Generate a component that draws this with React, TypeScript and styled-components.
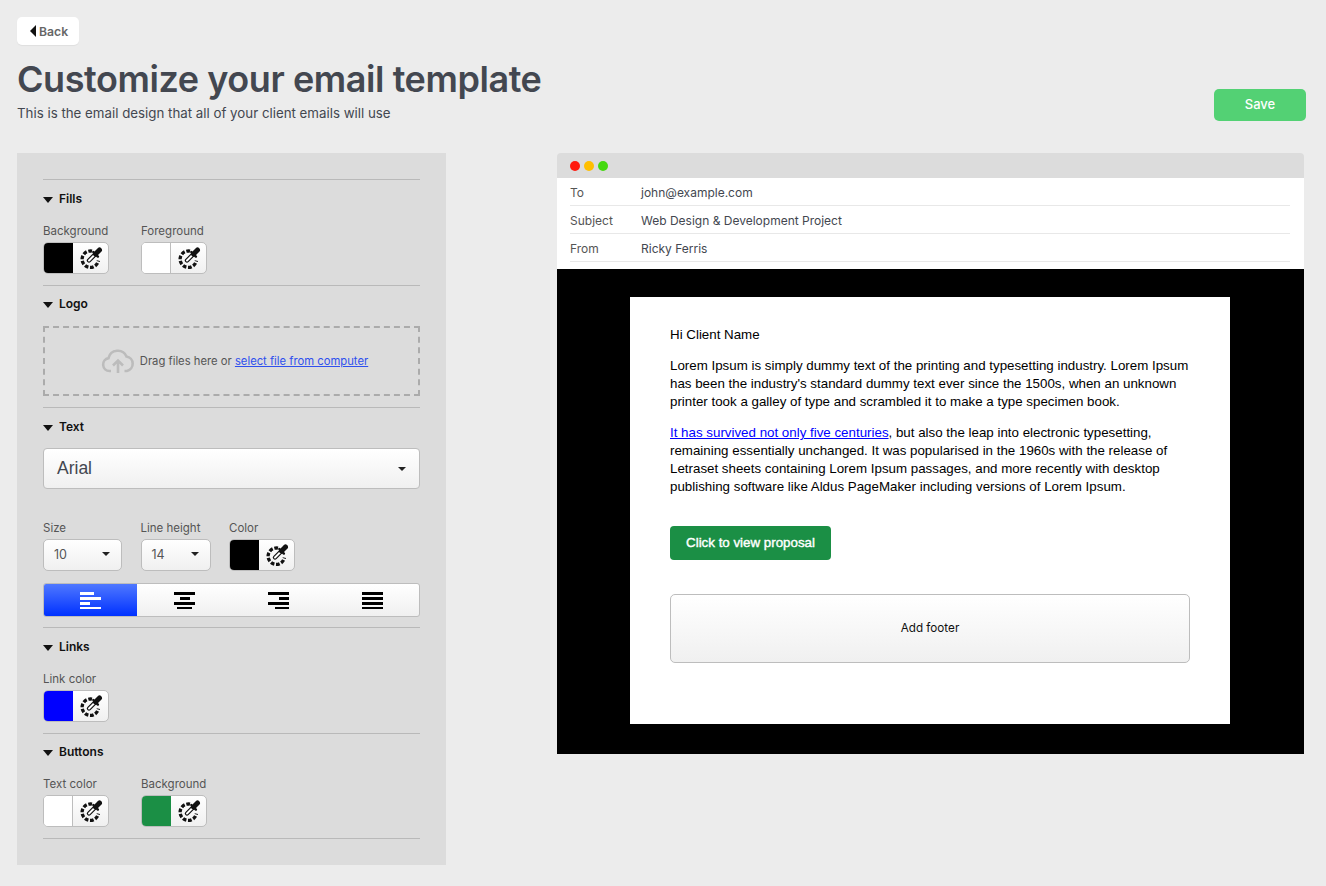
import React from "react";
import styled, { createGlobalStyle } from "styled-components";

const Global = createGlobalStyle`
  html, body { margin: 0; padding: 0; background: #ececec; }
  body { font-family: "Inter", "Liberation Sans", sans-serif; color: #434750; }
  * { box-sizing: border-box; }
`;
const Page = styled.div`
  width: 1326px; height: 886px; padding: 17px 20px 0 17px; overflow: hidden;
`;
const BackButton = styled.button`
  display: flex; align-items: center; gap: 3px; width: 62px; height: 28px; padding: 0 0 0 13px;
  background: #fff; border: 0; border-radius: 5px; box-shadow: 0 1px 1px rgba(0,0,0,.06);
  font: 600 12.2px "Inter", sans-serif; color: #666;
`;
const BackCaret = styled.span`
  width: 0; height: 0; border-style: solid; border-width: 6px 6px 6px 0;
  border-color: transparent #111 transparent transparent;
`;
const Header = styled.header`
  display: flex; justify-content: space-between; align-items: flex-start; height: 108px;
`;
const Heading = styled.h1`
  margin: 12px 0 0; font: 600 36px/44px "Inter", sans-serif; color: #434750; letter-spacing: -0.43px;
`;
const Sub = styled.p`
  margin: 3px 0 0; font: 400 13.3px/18px "Inter", sans-serif; color: #434750;
`;
const SaveButton = styled.button`
  width: 92px; height: 32px; margin-top: 44px; padding: 0 0 2px; background: #53d174; border: 0; border-radius: 5px;
  color: #fff; font: 500 13px "Inter", sans-serif;
`;
const Columns = styled.div`
  display: flex; justify-content: space-between; align-items: flex-start;
`;
const Panel = styled.aside`
  width: 429px; height: 712px; background: #dcdcdc; padding: 26px 26px 0;
`;
const Section = styled.section<{ $top?: number; $bottom?: number; $last?: boolean }>`
  border-top: 1px solid #b9b9b9; padding: ${p => p.$top ?? 11}px 0 ${p => p.$bottom ?? 11}px;
  ${p => p.$last ? "border-bottom: 1px solid #b9b9b9;" : ""}
`;
const SectionTitle = styled.h2`
  display: flex; align-items: center; gap: 6px; margin: 0; height: 16px;
  font: 600 12px/16px "Inter", sans-serif; color: #111;
`;
const TitleCaret = styled.span`
  width: 0; height: 0; border-style: solid; border-width: 6px 5px 0 5px;
  border-color: #111 transparent transparent transparent; margin-top: 2px;
`;
const FieldRow = styled.div<{ $gap: number; $top: number }>`
  display: flex; gap: ${p => p.$gap}px; margin-top: ${p => p.$top}px;
`;
const Field = styled.div`
  display: flex; flex-direction: column; gap: 3px;
`;
const Label = styled.label`
  font: 400 11.5px/16px "Inter", sans-serif; color: #555;
`;
const Picker = styled.div`
  display: flex; width: 66px; height: 32px; border: 1px solid #bdbdbd; border-radius: 5px; overflow: hidden;
  background: linear-gradient(#fff, #f0f0f0);
`;
const Swatch = styled.span<{ $color: string }>`
  width: 29px; background: ${p => p.$color};
  border-right: 1px solid ${p => (p.$color === "#fff" ? "#bdbdbd" : p.$color)};
`;
const PickerIcon = styled.span`
  flex: 1; display: flex; align-items: center; justify-content: center;
`;
const DropZone = styled.div`
  display: flex; align-items: center; justify-content: center; gap: 5px; height: 70px; margin-top: 14px; padding-left: 6px;
  border: 2px dashed #ababab; font: 400 11.25px "Inter", sans-serif; color: #555;
`;
const DropLink = styled.a`
  color: #2f50ee; text-decoration: underline;
`;
const FontSelect = styled.div`
  display: flex; align-items: center; justify-content: space-between; height: 41px; margin-top: 13px; padding: 0 13px 0 13px;
  border: 1px solid #bdbdbd; border-radius: 4px; background: linear-gradient(#fff, #f0f0f0);
  font: 400 17.5px "Liberation Sans", sans-serif; color: #434750;
`;
const SmallCaret = styled.span`
  width: 0; height: 0; border-style: solid; border-width: 4px 4px 0 4px;
  border-color: #222 transparent transparent transparent;
`;
const NumberSelect = styled.div<{ $width: number }>`
  display: flex; align-items: center; justify-content: space-between; width: ${p => p.$width}px; height: 32px;
  padding: 0 11px 2px 10px; border: 1px solid #bdbdbd; border-radius: 5px; background: linear-gradient(#fff, #f0f0f0);
  font: 400 12.5px "Inter", sans-serif; color: #555;
`;
const AlignGroup = styled.div`
  display: grid; grid-template-columns: 93px 1fr 1fr 1fr; height: 34px; margin-top: 12px;
  border: 1px solid #bdbdbd; border-radius: 3px; overflow: hidden; background: linear-gradient(#fff, #f0f0f0);
`;
const AlignCell = styled.div<{ $active?: boolean }>`
  display: flex; align-items: center; justify-content: center;
  ${p => p.$active ? "background: linear-gradient(#4f78ff, #0031ff);" : ""}
`;
const Preview = styled.main`
  width: 747px; margin-right: 2px;
`;
const TitleBar = styled.div`
  display: flex; align-items: center; gap: 4px; height: 25px; padding: 1px 0 0 13px; background: #dcdcdc; border-radius: 4px 4px 0 0;
`;
const Dot = styled.span<{ $color: string }>`
  width: 10px; height: 10px; border-radius: 50%; background: ${p => p.$color};
`;
const Meta = styled.div`
  background: #fff; padding: 0 14px 7px 13px;
`;
const MetaRow = styled.div`
  display: flex; align-items: center; height: 28px; padding-top: 2px; border-bottom: 1px solid #e8e8e8; font: 400 12px "Inter", sans-serif;
`;
const MetaKey = styled.span`
  width: 71px; color: #555;
`;
const MetaValue = styled.span`
  color: #434750;
`;
const EmailStage = styled.div`
  background: #000; padding: 28px 74px 30px 73px;
`;
const Card = styled.div`
  height: 427px; background: #fff; padding: 29px 40px 0; font: 400 13.33px/18px "Liberation Sans", sans-serif; color: #000;
`;
const Para = styled.p`
  margin: 0 0 13px;
`;
const EmailLink = styled.a`
  color: #00f; text-decoration: underline;
`;
const CtaButton = styled.button`
  display: block; width: 161px; height: 34px; margin-top: 30px; padding: 0 0 2px; background: #1b8f45; border: 0; border-radius: 4px;
  color: #fff; font: 400 13.33px "Liberation Sans", sans-serif; -webkit-text-stroke: 0.4px #fff;
`;
const FooterButton = styled.div`
  display: flex; align-items: center; justify-content: center; height: 69px; margin-top: 34px; padding-bottom: 2px;
  border: 1px solid #bdbdbd; border-radius: 5px; background: linear-gradient(#fff, #f0f0f0);
  font: 400 11.7px "Inter", sans-serif; color: #111;
`;

const DropperIcon = () => (
  <svg width="24" height="24" viewBox="0 0 24 24" aria-hidden="true">
    <path d="M13 5.2A8.2 8.2 0 1 0 19.4 14.6" fill="none" stroke="#111" strokeWidth="3.3" strokeDasharray="3.7 1.7" />
    <path d="M10 14.5L16 8.5" stroke="#111" strokeWidth="4.4" strokeLinecap="round" />
    <path d="M10 14.5L15 9.5" stroke="#fff" strokeWidth="2" strokeLinecap="round" />
    <path d="M16.5 8L20.5 4" stroke="#111" strokeWidth="5" strokeLinecap="round" />
    <path d="M14.3 6L18.9 10.6" stroke="#111" strokeWidth="2.4" strokeLinecap="round" />
  </svg>
);

const CloudIcon = () => (
  <svg width="34" height="26" viewBox="0 0 34 26" aria-hidden="true" fill="none" stroke="#bcbcbc" strokeWidth="2.6">
    <path d="M10 23H8.5a6.5 6.5 0 0 1-1-12.9A9.5 9.5 0 0 1 25.5 8.5 7.4 7.4 0 0 1 26 23h-2.5" />
    <path d="M17 25V13M12 17.5l5-5 5 5" />
  </svg>
);

const bars: Record<string, [number, number][]> = {
  left: [[0, 14], [0, 21], [0, 10], [0, 21]],
  center: [[0, 21], [6, 10], [0, 21], [3, 15]],
  right: [[0, 21], [11, 10], [0, 21], [7, 14]],
  justify: [[0, 21], [0, 21], [0, 21], [0, 21]],
};

const AlignIcon = ({ kind, color }: { kind: string; color: string }) => (
  <svg width="21" height="18" viewBox="0 0 21 18" aria-hidden="true">
    {bars[kind].map(([x, w], i) => (
      <rect key={i} x={x} y={i * 5 + 1} width={w} height="3" fill={color} />
    ))}
  </svg>
);

const ColorPicker = ({ color }: { color: string }) => (
  <Picker>
    <Swatch $color={color} />
    <PickerIcon><DropperIcon /></PickerIcon>
  </Picker>
);

const ColorField = ({ label, color }: { label: string; color: string }) => (
  <Field>
    <Label>{label}</Label>
    <ColorPicker color={color} />
  </Field>
);

const Title = ({ children }: { children: React.ReactNode }) => (
  <SectionTitle><TitleCaret />{children}</SectionTitle>
);

export default function App() {
  return (
    <Page>
      <Global />
      <BackButton><BackCaret />Back</BackButton>
      <Header>
        <div>
          <Heading>Customize your email template</Heading>
          <Sub>This is the email design that all of your client emails will use</Sub>
        </div>
        <SaveButton>Save</SaveButton>
      </Header>
      <Columns>
        <Panel>
          <Section>
            <Title>Fills</Title>
            <FieldRow $gap={32} $top={16}>
              <ColorField label="Background" color="#000" />
              <ColorField label="Foreground" color="#fff" />
            </FieldRow>
          </Section>
          <Section $top={10}>
            <Title>Logo</Title>
            <DropZone>
              <CloudIcon />
              <span>Drag files here or <DropLink href="#">select file from computer</DropLink></span>
            </DropZone>
          </Section>
          <Section $bottom={10}>
            <Title>Text</Title>
            <FontSelect>Arial<SmallCaret /></FontSelect>
            <FieldRow $gap={18.5} $top={31}>
              <Field>
                <Label>Size</Label>
                <NumberSelect $width={79}>10<SmallCaret /></NumberSelect>
              </Field>
              <Field>
                <Label>Line height</Label>
                <NumberSelect $width={70}>14<SmallCaret /></NumberSelect>
              </Field>
              <ColorField label="Color" color="#000" />
            </FieldRow>
            <AlignGroup>
              <AlignCell $active><AlignIcon kind="left" color="#fff" /></AlignCell>
              <AlignCell><AlignIcon kind="center" color="#000" /></AlignCell>
              <AlignCell><AlignIcon kind="right" color="#000" /></AlignCell>
              <AlignCell><AlignIcon kind="justify" color="#000" /></AlignCell>
            </AlignGroup>
          </Section>
          <Section>
            <Title>Links</Title>
            <FieldRow $gap={32} $top={16}>
              <ColorField label="Link color" color="#00f" />
            </FieldRow>
          </Section>
          <Section $top={10} $last>
            <Title>Buttons</Title>
            <FieldRow $gap={32} $top={16}>
              <ColorField label="Text color" color="#fff" />
              <ColorField label="Background" color="#1b8f45" />
            </FieldRow>
          </Section>
        </Panel>
        <Preview>
          <TitleBar>
            <Dot $color="#ff1a0e" />
            <Dot $color="#ffbf00" />
            <Dot $color="#44d90f" />
          </TitleBar>
          <Meta>
            <MetaRow><MetaKey>To</MetaKey><MetaValue>john@example.com</MetaValue></MetaRow>
            <MetaRow><MetaKey>Subject</MetaKey><MetaValue>Web Design &amp; Development Project</MetaValue></MetaRow>
            <MetaRow><MetaKey>From</MetaKey><MetaValue>Ricky Ferris</MetaValue></MetaRow>
          </Meta>
          <EmailStage>
            <Card>
              <Para>Hi Client Name</Para>
              <Para>Lorem Ipsum is simply dummy text of the printing and typesetting industry. Lorem Ipsum has been the industry's standard dummy text ever since the 1500s, when an unknown printer took a galley of type and scrambled it to make a type specimen book.</Para>
              <Para><EmailLink href="#">It has survived not only five centuries</EmailLink>, but also the leap into electronic typesetting, remaining essentially unchanged. It was popularised in the 1960s with the release of Letraset sheets containing Lorem Ipsum passages, and more recently with desktop publishing software like Aldus PageMaker including versions of Lorem Ipsum.</Para>
              <CtaButton>Click to view proposal</CtaButton>
              <FooterButton>Add footer</FooterButton>
            </Card>
          </EmailStage>
        </Preview>
      </Columns>
    </Page>
  );
}
